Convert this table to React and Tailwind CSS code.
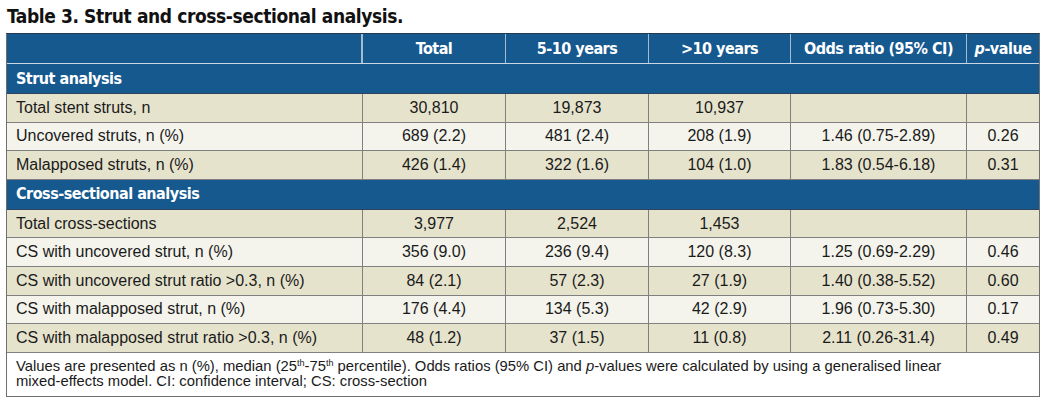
import React from 'react';

const cond = { fontFamily: '"Liberation Sans Narrow", "DejaVu Sans Condensed", "Liberation Sans", sans-serif' };
const body = { fontFamily: '"Liberation Sans", Arial, sans-serif' };

const cols = 'grid grid-cols-[356px_143px_143px_142px_176px_1fr]';

const strutRows = [
  ['Total stent struts, n', '30,810', '19,873', '10,937', '', ''],
  ['Uncovered struts, n (%)', '689 (2.2)', '481 (2.4)', '208 (1.9)', '1.46 (0.75-2.89)', '0.26'],
  ['Malapposed struts, n (%)', '426 (1.4)', '322 (1.6)', '104 (1.0)', '1.83 (0.54-6.18)', '0.31'],
];

const csRows = [
  ['Total cross-sections', '3,977', '2,524', '1,453', '', ''],
  ['CS with uncovered strut, n (%)', '356 (9.0)', '236 (9.4)', '120 (8.3)', '1.25 (0.69-2.29)', '0.46'],
  ['CS with uncovered strut ratio >0.3, n (%)', '84 (2.1)', '57 (2.3)', '27 (1.9)', '1.40 (0.38-5.52)', '0.60'],
  ['CS with malapposed strut, n (%)', '176 (4.4)', '134 (5.3)', '42 (2.9)', '1.96 (0.73-5.30)', '0.17'],
  ['CS with malapposed strut ratio >0.3, n (%)', '48 (1.2)', '37 (1.5)', '11 (0.8)', '2.11 (0.26-31.4)', '0.49'],
];

function DataRow({ row, shade }) {
  return (
    <div
      className={`${cols} h-[28.6px] border-b border-[#808080] text-[16px] text-[#1a1a1a] ${shade ? 'bg-[#e6e3cd]' : 'bg-[#f4f4ec]'}`}
      style={body}
    >
      {row.map((cell, i) => (
        <div
          key={i}
          className={`flex items-center ${i === 0 ? 'pl-[9px]' : 'justify-center'} ${i < 5 ? 'border-r border-[#808080]' : ''}`}
        >
          {cell}
        </div>
      ))}
    </div>
  );
}

function Section({ title }) {
  return (
    <div
      className="flex h-[30px] items-center border-b border-[#2b4460] bg-[#15598f] pl-[9px] text-[16px] font-bold tracking-[-0.5px] text-white"
      style={cond}
    >
      {title}
    </div>
  );
}

export default function App() {
  return (
    <div className="h-[402px] w-[1044px] bg-white">
      <div
        className="h-[33px] pl-[7px] pt-[5px] text-[19px] font-bold leading-[22px] tracking-[-0.4px] text-[#111]"
        style={cond}
      >
        Table 3. Strut and cross-sectional analysis.
      </div>
      <div className="ml-[6px] w-[1034px] border border-[#6f6f6f] border-t-[#24374d]">
        <div
          className={`${cols} h-[30px] border-b border-[#c9d6e3] bg-[#15598f] text-[16px] font-bold tracking-[-0.5px] text-white`}
          style={cond}
        >
          <div className="border-r-2 border-[#a7bbd0]" />
          <div className="flex items-center justify-center border-r border-[#a7bbd0]">Total</div>
          <div className="flex items-center justify-center border-r border-[#a7bbd0]">5-10 years</div>
          <div className="flex items-center justify-center border-r border-[#a7bbd0]">&gt;10 years</div>
          <div className="flex items-center justify-center border-r border-[#a7bbd0]">Odds ratio (95% CI)</div>
          <div className="flex items-center justify-center">
            <i>p</i>-value
          </div>
        </div>
        <Section title="Strut analysis" />
        {strutRows.map((r, i) => (
          <DataRow key={i} row={r} shade={i % 2 === 0} />
        ))}
        <Section title="Cross-sectional analysis" />
        {csRows.map((r, i) => (
          <DataRow key={i} row={r} shade={i % 2 === 0} />
        ))}
        <div className="h-[43px] bg-white pl-[9px] pt-[6px] text-[14.8px] leading-[15px] text-[#1a1a1a]" style={body}>
          Values are presented as n (%), median (25<sup className="text-[9px]">th</sup>-75<sup className="text-[9px]">th</sup> percentile). Odds ratios (95% CI) and <i>p</i>-values were calculated by using a generalised linear
          <br />
          mixed-effects model. CI: confidence interval; CS: cross-section
        </div>
      </div>
    </div>
  );
}
